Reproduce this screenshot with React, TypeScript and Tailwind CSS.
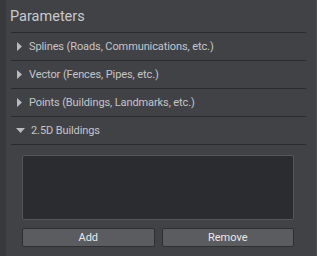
import React from "react";

const font = { fontFamily: 'Roboto, "Liberation Sans", Arial, sans-serif' };

function Row({ label, open }: { label: string; open?: boolean }) {
  return (
    <div className="h-[28px] border-t border-[#2a2b2d] flex items-center">
      {open ? (
        <svg width="9" height="6" viewBox="0 0 9 6" className="ml-[5px] mr-[6px]">
          <polygon points="0,0 9,0 4.5,5" fill="#b8babd" />
        </svg>
      ) : (
        <svg width="6" height="9" viewBox="0 0 6 9" className="ml-[6px] mr-[6px]">
          <polygon points="0,0 5,4.5 0,9" fill="#b8babd" />
        </svg>
      )}
      <span className="text-[11px] tracking-[-0.1px] text-[#c4c6ca] leading-none">{label}</span>
    </div>
  );
}

export default function App() {
  return (
    <div className="w-[317px] h-[256px] bg-[#3b3c3f] flex" style={font}>
      <div className="w-[6px] bg-[#38393c]" />
      <div className="flex-1 bg-[#414246] border-r border-[#4c4d51] flex flex-col">
        <div className="h-[32px] pl-[4px] pt-[2px] flex items-center text-[14.5px] text-[#c8cacd]">Parameters</div>
        <div className="ml-[5px] mr-[10px]">
          <Row label="Splines (Roads, Communications, etc.)" />
          <Row label="Vector (Fences, Pipes, etc.)" />
          <Row label="Points (Buildings, Landmarks, etc.)" />
          <Row label="2.5D Buildings" open />
          <div className="border-t border-[#2a2b2d] pt-[10px] pl-[11px] pr-[12px]">
            <div className="h-[65px] bg-[#2b2c2f] border border-[#55565a] rounded-[2px]" />
            <div className="mt-[8px] flex gap-[7px]">
              <button className="flex-1 h-[19px] bg-[#5b5c60] border border-[#2e2f31] rounded-[2px] text-[11px] text-[#e8e9ea] leading-none">Add</button>
              <button className="flex-1 h-[19px] bg-[#5b5c60] border border-[#2e2f31] rounded-[2px] text-[11px] text-[#e8e9ea] leading-none">Remove</button>
            </div>
          </div>
        </div>
      </div>
    </div>
  );
}
